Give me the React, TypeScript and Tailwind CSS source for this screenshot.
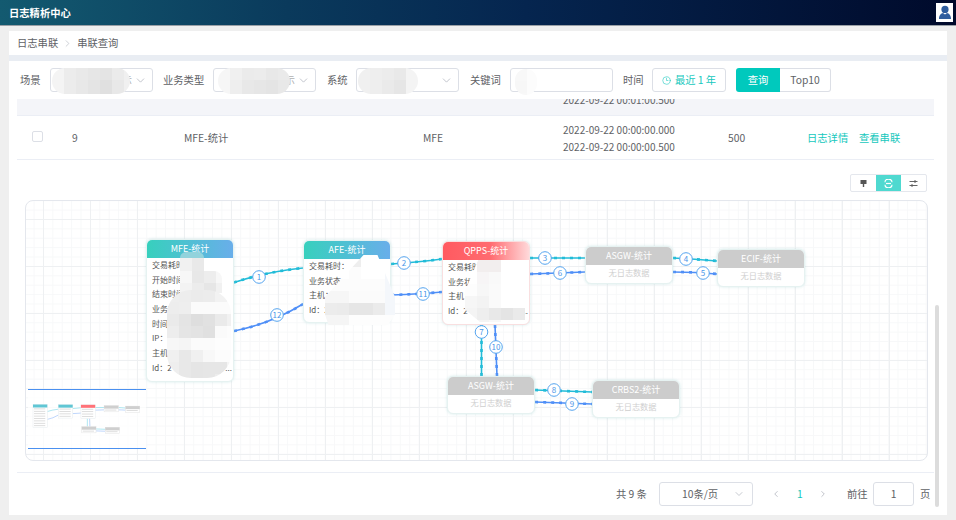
import type { ReactNode } from "react";
import { ChevronDown, ChevronLeft, ChevronRight, Clock3 } from "lucide-react";

type Node = {
  title: string;
  x: number;
  y: number;
  w: number;
  h: number;
  head: string;
  rows?: string[];
  dots?: boolean;
};

const nodes: Node[] = [
  {
    title: "MFE-统计",
    x: 121,
    y: 39,
    w: 88,
    h: 143,
    head: "bg-[linear-gradient(90deg,#37d0bd,#69aeea)]",
    rows: ["交易耗时：", "开始时间：", "结束时间：", "业务状态：", "时间：", "IP：1", "主机：", "Id：2"],
    dots: true,
  },
  {
    title: "AFE-统计",
    x: 278,
    y: 40,
    w: 88,
    h: 83,
    head: "bg-[linear-gradient(90deg,#37d0bd,#69aeea)]",
    rows: ["交易耗时：", "业务状态：", "主机：", "Id：2"],
  },
  {
    title: "QPPS-统计",
    x: 417,
    y: 41,
    w: 88,
    h: 84,
    head: "bg-[linear-gradient(90deg,#ff5a60,#ff6b70_55%,#ffd9da)]",
    rows: ["交易耗时：", "业务状态：", "主机：", "Id：2"],
    dots: true,
  },
  { title: "ASGW-统计", x: 560, y: 46, w: 88, h: 38, head: "bg-[#cccccc]" },
  { title: "ECIF-统计", x: 692, y: 49, w: 88, h: 38, head: "bg-[#cccccc]" },
  { title: "ASGW-统计", x: 422, y: 176, w: 88, h: 38, head: "bg-[#cccccc]" },
  { title: "CRBS2-统计", x: 567, y: 180, w: 88, h: 38, head: "bg-[#cccccc]" },
];

// 连线：起点、标签、终点（相对画布）
const edges = [
  { n: 1, c: "#22bcd8", d: "M209 82.5 Q240 72 278 68", lx: 234, ly: 77 },
  { n: 12, c: "#4f8ff7", d: "M209 131 Q245 124 278 104", lx: 252, ly: 115 },
  { n: 2, c: "#22bcd8", d: "M366 64 Q395 62 417 59", lx: 379, ly: 63 },
  { n: 11, c: "#4f8ff7", d: "M366 95 Q395 94 417 92", lx: 398, ly: 94 },
  { n: 3, c: "#22bcd8", d: "M505 58 L560 58", lx: 520, ly: 58 },
  { n: 6, c: "#4f8ff7", d: "M505 74 Q535 73 560 72", lx: 535, ly: 73 },
  { n: 4, c: "#22bcd8", d: "M648 58 Q670 59 692 61", lx: 661, ly: 59 },
  { n: 5, c: "#4f8ff7", d: "M648 72 Q670 72 692 74", lx: 678, ly: 73 },
  { n: 7, c: "#22bcd8", d: "M456.5 125 L456.5 176", lx: 456.5, ly: 132 },
  { n: 10, c: "#4f8ff7", d: "M470 125 L472 176", lx: 471, ly: 147 },
  { n: 8, c: "#22bcd8", d: "M510 190 Q540 191 567 192", lx: 529, ly: 190 },
  { n: 9, c: "#4f8ff7", d: "M510 202 Q540 203 567 204", lx: 547, ly: 204 },
];

const SCALE = 0.162;

function Blur({ className, cell = 12, colors }: { className: string; cell?: number; colors: string[][] }) {
  // 截图里的马赛克遮挡
  return (
    <div className={`absolute overflow-hidden ${className}`}>
      {colors.map((row, i) => (
        <div key={i} className="flex">
          {row.map((c, j) => (
            <div key={j} className="shrink-0" style={{ width: cell, height: cell, background: c }} />
          ))}
        </div>
      ))}
    </div>
  );
}

function Select({ tail, children }: { tail?: boolean; children?: ReactNode }) {
  return (
    <div className="relative w-[103px] h-[24px] rounded-[3px] border border-[#dcdfe6] bg-white flex items-center justify-end pr-[5px]">
      {tail && <span className="mr-[2px] text-[#b0b0b0]">示</span>}
      <ChevronDown className="w-[13px] h-[13px] text-[#b4b8c0]" strokeWidth={1.5} />
      {children}
    </div>
  );
}

function NodeCard({ node }: { node: Node }) {
  const red = node.title.startsWith("QPPS");
  return (
    <div
      className={`absolute bg-white rounded-[6px] overflow-hidden border shadow-[0_0_3px_rgba(160,210,210,0.45)] ${
        red ? "border-[#f9dfe0]" : "border-[#e6f2f1]"
      }`}
      style={{ left: node.x, top: node.y, width: node.w, height: node.h }}
    >
      <div className={`h-[18px] ${node.head} text-white text-[9px] leading-[18px] text-center`}>{node.title}</div>
      {node.rows ? (
        <div className="pl-[5px] pr-[1px]">
          {node.rows.map((r, i) => (
            <div key={i} className="h-[14.7px] flex justify-between text-[8px] leading-[14.7px] text-[#555] whitespace-nowrap">
              <span>{r}</span>
              {node.dots && i === node.rows!.length - 1 && <span>...</span>}
            </div>
          ))}
        </div>
      ) : (
        <div className="text-center text-[8.2px] leading-[15px] text-[#cfcfcf]">无日志数据</div>
      )}
    </div>
  );
}

function Graph() {
  return (
    <div className="relative mt-[8px] ml-[8px] w-[903px] h-[261px] rounded-[8px] border border-[#e4e7ed] overflow-hidden bg-white bg-[linear-gradient(#eef0f2_1px,transparent_1px),linear-gradient(90deg,#eef0f2_1px,transparent_1px),linear-gradient(#f7f8f9_1px,transparent_1px),linear-gradient(90deg,#f7f8f9_1px,transparent_1px)] bg-[size:47px_47px,47px_47px,9.4px_9.4px,9.4px_9.4px] bg-[position:17px_18px,17px_18px,7.6px_8.6px,7.6px_8.6px]">
      <div className="absolute -left-px -top-px w-[903px] h-[261px]">
        <svg className="absolute left-0 top-0" width="903" height="261">
          {edges.map((e) => (
            <g key={e.n}>
              <path d={e.d} fill="none" stroke={e.c} strokeWidth="1.6" />
              <path d={e.d} fill="none" stroke={e.c} strokeWidth="2.6" strokeDasharray="3 5" />
            </g>
          ))}
        </svg>

        {nodes.map((n) => (
          <NodeCard key={n.title + n.x} node={n} />
        ))}

        <svg className="absolute left-0 top-0" width="903" height="261">
          {edges.map((e) => (
            <g key={e.n}>
              <circle cx={e.lx} cy={e.ly} r="6.3" fill="#fff" stroke="#55a4ef" />
              <text x={e.lx} y={e.ly + 3} textAnchor="middle" fontSize="8" fill="#4a97e8">
                {e.n}
              </text>
            </g>
          ))}
        </svg>

        {/* MFE 遮挡 */}
        <div className="absolute left-[155px] top-[52px] w-[24px] h-[6px] rounded-t-[12px] bg-[#92d3dc]" />
        <Blur
          className="left-[155px] top-[58px] w-[24px] h-[14px]"
          colors={[["#f1f1f1", "#e9e9e9"], ["#f1f1f1", "#e9e9e9"]]}
        />
        <Blur
          className="left-[155px] top-[71px] w-[42px] h-[22px] rounded-tr-[8px]"
          colors={[
            ["#f7f7f7", "#e8e8e8", "#ededed", "#f7f7f7"],
            ["#f3f3f3", "#ececec", "#e6e6e6", "#f1f1f1"],
          ]}
        />
        <Blur
          className="left-[142px] top-[90px] w-[64px] h-[88px] rounded-[24px]"
          colors={[
            ["#eeeeee", "#ededed", "#ebebeb", "#ececec", "#f2f2f2", "#fbfbfb"],
            ["#ededed", "#eeeeee", "#fbfbfb", "#fbfbfb", "#fbfbfb", "#fbfbfb"],
            ["#eaeaea", "#e4e4e4", "#dedede", "#e1e1e1", "#eaeaea", "#f1f1f1"],
            ["#ededed", "#e5e5e5", "#e3e3e3", "#e0e0e0", "#fafafa", "#fcfcfc"],
            ["#f7f7f7", "#f5f5f5", "#fbfbfb", "#fbfbfb", "#fdfdfd", "#fdfdfd"],
            ["#f0f0f0", "#e8e8e8", "#f0f0f0", "#f8f8f8", "#fcfcfc", "#fcfcfc"],
            ["#eeeeee", "#e8e8e8", "#e5e5e5", "#e6e6e6", "#e6e6e6", "#f4f4f4"],
            ["#f0f0f0", "#e8e8e8", "#e5e5e5", "#e6e6e6", "#ececec", "#f8f8f8"],
          ]}
        />
        {/* AFE 遮挡 */}
        <Blur
          className="left-[300px] top-[55px] w-[70px] h-[70px] [clip-path:polygon(55%_0,75%_0,100%_60%,100%_85%,90%_100%,5%_100%,0_85%,0_60%)]"
          colors={[
            ["#fff", "#fff", "#eeeeee", "#fff", "#fff", "#f8fafc"],
            ["#fff", "#fff", "#fcfcfc", "#fff", "#fff", "#f4f7fb"],
            ["#fcfcfc", "#fcfcfc", "#fcfcfc", "#fcfcfc", "#fcfcfc", "#f4f7fb"],
            ["#f6f6f6", "#f6f6f6", "#fbfbfb", "#fbfbfb", "#fbfbfb", "#f4f7fb"],
            ["#ececec", "#ebebeb", "#e6e6e6", "#e6e6e6", "#ebebeb", "#f4f7fb"],
            ["#f5f5f5", "#f5f5f5", "#fdfdfd", "#fdfdfd", "#fdfdfd", "#fdfdfd"],
          ]}
        />
        {/* QPPS 遮挡 */}
        <Blur
          className="left-[440px] top-[60px] w-[60px] h-[62px] [clip-path:polygon(22%_0,62%_0,100%_38%,100%_100%,25%_100%,0_80%,0_50%)]"
          colors={[
            ["#fff", "#f2eeee", "#f2eeee", "#fff", "#fff", "#fff"],
            ["#fff", "#f7f5f6", "#f9f9f9", "#fff", "#fff", "#fff"],
            ["#fdfdfd", "#f7f7f7", "#fafafa", "#fff", "#fff", "#fff"],
            ["#f6f6f6", "#f3f3f3", "#fafafa", "#fff", "#fff", "#fff"],
            ["#f4f4f4", "#eeeeee", "#e8e8e8", "#e4e4e4", "#eaeaea", "#fff"],
            ["#f4f4f4", "#f4f4f4", "#f8f8f8", "#fff", "#fff", "#fff"],
          ]}
        />

        {/* 缩略图 */}
        <div className="absolute left-[3px] top-[189px] w-[118px] h-[60px] bg-white/70 border-y border-[#4a90f0]">
          <svg width="118" height="58">
            {edges.map((e) => (
              <path
                key={e.n}
                d={e.d}
                fill="none"
                stroke={e.c}
                strokeOpacity="0.45"
                strokeWidth="5"
                transform={`translate(${5 - 121 * SCALE} ${14.5 - 39 * SCALE}) scale(${SCALE})`}
              />
            ))}
            {nodes.map((n) => {
              const x = (n.x - 121) * SCALE + 5;
              const y = (n.y - 39) * SCALE + 14.5;
              return (
                <g key={n.title + n.x}>
                  <rect x={x} y={y} width={n.w * SCALE} height={n.h * SCALE} fill="#fff" stroke={n.rows ? "#e6ecee" : "#e4e4e4"} strokeWidth="0.5" />
                  <rect
                    x={x}
                    y={y}
                    width={n.w * SCALE}
                    height="3"
                    fill={n.title.startsWith("QPPS") ? "#ff7278" : n.rows ? "#60c6d4" : "#cfcfcf"}
                  />
                  {Array.from({ length: n.rows ? n.rows.length : 1 }).map((_, i) => (
                    <rect key={i} x={x + 1} y={y + 4 + i * 2.4} width={n.w * SCALE - 3} height="0.8" fill="#d6d6d6" />
                  ))}
                </g>
              );
            })}
          </svg>
        </div>
      </div>
    </div>
  );
}

export default function App() {
  return (
    <div className="w-[956px] h-[520px] overflow-hidden bg-[#efefef] text-[10.3px] text-[#606266] font-['Noto_Sans_CJK_SC',sans-serif]">
      {/* 顶栏 */}
      <div className="h-[26px] border-b border-[#9aa0a6] bg-[linear-gradient(90deg,#135a70,#0a3a5c_30%,#05254f_55%,#000a2b)] flex items-center justify-between pl-[9px] pr-[3px]">
        <span className="text-white text-[10.3px] font-bold">日志精析中心</span>
        <div className="w-[17px] h-[19px] bg-white flex items-center justify-center">
          <svg width="14" height="15" viewBox="0 0 14 15">
            <circle cx="7" cy="4.4" r="3.6" fill="#2f5d9e" />
            <path d="M1 14 C1 10 3 8.4 5 8 L7 9.5 L9 8 C11 8.4 13 10 13 14 Z" fill="#2f5d9e" />
          </svg>
        </div>
      </div>

      <div className="flex items-start pt-[5px] pl-[9px]">
        <div className="relative w-[938px] h-[484px] bg-white flex flex-col">
          {/* 面包屑 */}
          <div className="h-[24px] shrink-0 flex items-center pl-[8px] gap-[4px]">
            <span>日志串联</span>
            <ChevronRight className="w-[11px] h-[11px] text-[#b8bcc4]" strokeWidth={1.5} />
            <span>串联查询</span>
          </div>
          <div className="h-[6px] shrink-0 bg-[#e9edf3]" />

          {/* 查询条件 */}
          <div className="h-[38px] shrink-0 flex items-center pl-[11px]">
            <span className="w-[30px]">场景</span>
            <Select tail>
              <Blur
                className="left-[1px] -top-[1px] w-[78px] h-[26px] rounded-[13px]"
                colors={[
                  ["#f4f4f4", "#ececec", "#e9e9e9", "#e6e6e6", "#e4e4e4", "#ebebeb", "#f0f0f0"],
                  ["#f4f4f4", "#ececec", "#e8e8e8", "#e4e4e4", "#e0e0e0", "#e8e8e8", "#f0f0f0"],
                  ["#f4f4f4", "#ececec", "#e8e8e8", "#e4e4e4", "#e0e0e0", "#e8e8e8", "#f0f0f0"],
                ]}
              />
            </Select>
            <span className="w-[50px] ml-[10px]">业务类型</span>
            <Select tail>
              <Blur
                className="left-[4px] -top-[1px] w-[72px] h-[26px] rounded-[13px]"
                colors={[
                  ["#f6f6f6", "#f0f0f0", "#ebebeb", "#ececec", "#e8e8e8", "#eaeaea"],
                  ["#f6f6f6", "#eeeeee", "#e8e8e8", "#e6e6e6", "#e4e4e4", "#e8e8e8"],
                  ["#f6f6f6", "#eeeeee", "#e8e8e8", "#e6e6e6", "#e4e4e4", "#e8e8e8"],
                ]}
              />
            </Select>
            <span className="w-[29px] ml-[11px]">系统</span>
            <Select>
              <Blur
                className="left-[1px] -top-[1px] w-[60px] h-[26px] rounded-[13px]"
                colors={[
                  ["#f0f0f0", "#eeeeee", "#ececec", "#e9e9e9", "#f4f4f4"],
                  ["#f0f0f0", "#eeeeee", "#eaeaea", "#e6e6e6", "#f4f4f4"],
                  ["#f0f0f0", "#eeeeee", "#eaeaea", "#e6e6e6", "#f4f4f4"],
                ]}
              />
            </Select>
            <span className="w-[40px] ml-[11px]">关键词</span>
            <div className="relative w-[103px] h-[24px] rounded-[3px] border border-[#dcdfe6]">
              <Blur
                className="left-[4px] top-0 w-[22px] h-[26px] rounded-[11px]"
                colors={[
                  ["#f8f8f8", "#fcfcfc"],
                  ["#f7f7f7", "#fcfcfc"],
                  ["#f8f8f8", "#fcfcfc"],
                ]}
              />
            </div>
            <span className="w-[29px] ml-[10px]">时间</span>
            <div className="w-[74px] h-[24px] rounded-[3px] border border-[#dcdfe6] flex items-center justify-center gap-[4px] text-[#14c8bd]">
              <Clock3 className="w-[9px] h-[9px]" strokeWidth={1.5} />
              <span>最近 1 年</span>
            </div>
            <div className="ml-[10px] h-[24px] flex">
              <div className="w-[44px] rounded-l-[3px] bg-[#00c9bd] text-white flex items-center justify-center">查询</div>
              <div className="w-[51px] rounded-r-[3px] border border-l-0 border-[#dcdfe6] flex items-center justify-center">Top10</div>
            </div>
          </div>

          {/* 表格 */}
          <div className="ml-[8px] w-[917px] flex-1 min-h-0 flex flex-col">
            <div className="h-[16px] shrink-0 bg-[#f4f5f9] overflow-hidden">
              <div className="ml-[546px] -mt-[8px] leading-[18px] text-[10px]">2022-09-22 00:01:00.500</div>
            </div>
            <div className="h-[45px] shrink-0 border-y border-[#ebeef5] grid grid-cols-[40px_112px_239px_140px_165px_79px_52px_60px] items-center pl-[15px] whitespace-nowrap">
              <div className="w-[11px] h-[11px] rounded-[2px] border border-[#dcdfe6] -mt-[2px]" />
              <span>9</span>
              <span>MFE-统计</span>
              <span>MFE</span>
              <div className="leading-[17px] text-[10px]">
                <div>2022-09-22 00:00:00.000</div>
                <div>2022-09-22 00:00:00.500</div>
              </div>
              <span>500</span>
              <span className="text-[#14c8bd]">日志详情</span>
              <span className="text-[#14c8bd]">查看串联</span>
            </div>

            <div className="h-[313px] shrink-0 border-b border-[#ebeef5] flex flex-col">
              <div className="h-[32px] shrink-0 flex justify-end items-end pr-[7px]">
                <div className="w-[77px] h-[18px] flex rounded-[2px] border border-[#e4e7ed]">
                  <div className="flex-1 flex items-center justify-center">
                    <svg width="9" height="9" viewBox="0 0 9 9">
                      <path d="M1.5 1 H7.5 V5 H5.2 V8 H3.8 V5 H1.5 Z" fill="#555" />
                    </svg>
                  </div>
                  <div className="flex-1 bg-[#4fd9d0] flex items-center justify-center">
                    <svg width="9" height="9" viewBox="0 0 9 9" fill="none" stroke="#fff" strokeWidth="1.2">
                      <path d="M1 3.2 A3.5 3 0 0 1 8 3.2" />
                      <path d="M1 5.8 A3.5 3 0 0 0 8 5.8" />
                      <path d="M2 4.5 H7" />
                    </svg>
                  </div>
                  <div className="flex-1 flex items-center justify-center">
                    <svg width="9" height="9" viewBox="0 0 9 9" fill="none" stroke="#555" strokeWidth="0.9">
                      <path d="M0.5 2.5 H8.5 M0.5 6.5 H8.5" />
                      <path d="M6 1 V4 M3 5 V8" />
                    </svg>
                  </div>
                </div>
              </div>
              <Graph />
            </div>

            {/* 分页 */}
            <div className="h-[42px] shrink-0 flex items-center pl-[599px] whitespace-nowrap">
              <span className="w-[43px]">共 9 条</span>
              <div className="w-[94px] h-[24px] rounded-[3px] border border-[#dcdfe6] flex items-center pl-[22px] pr-[7px] justify-between">
                <span>10条/页</span>
                <ChevronDown className="w-[12px] h-[12px] text-[#b4b8c0]" strokeWidth={1.5} />
              </div>
              <ChevronLeft className="w-[10px] h-[10px] ml-[18px] text-[#b4b8c0]" />
              <span className="ml-[16px] w-[6px] text-[#14c8bd]">1</span>
              <ChevronRight className="w-[10px] h-[10px] ml-[15px] text-[#b4b8c0]" />
              <span className="ml-[19px] w-[21px]">前往</span>
              <div className="ml-[5px] w-[41px] h-[24px] rounded-[3px] border border-[#dcdfe6] flex items-center justify-center">1</div>
              <span className="ml-[6px]">页</span>
            </div>
          </div>

          {/* 滚动条 */}
          <div className="absolute left-[926px] top-[274px] w-[4px] h-[202px] bg-[#dcdcdc] rounded-[2px]" />
        </div>
      </div>
    </div>
  );
}
